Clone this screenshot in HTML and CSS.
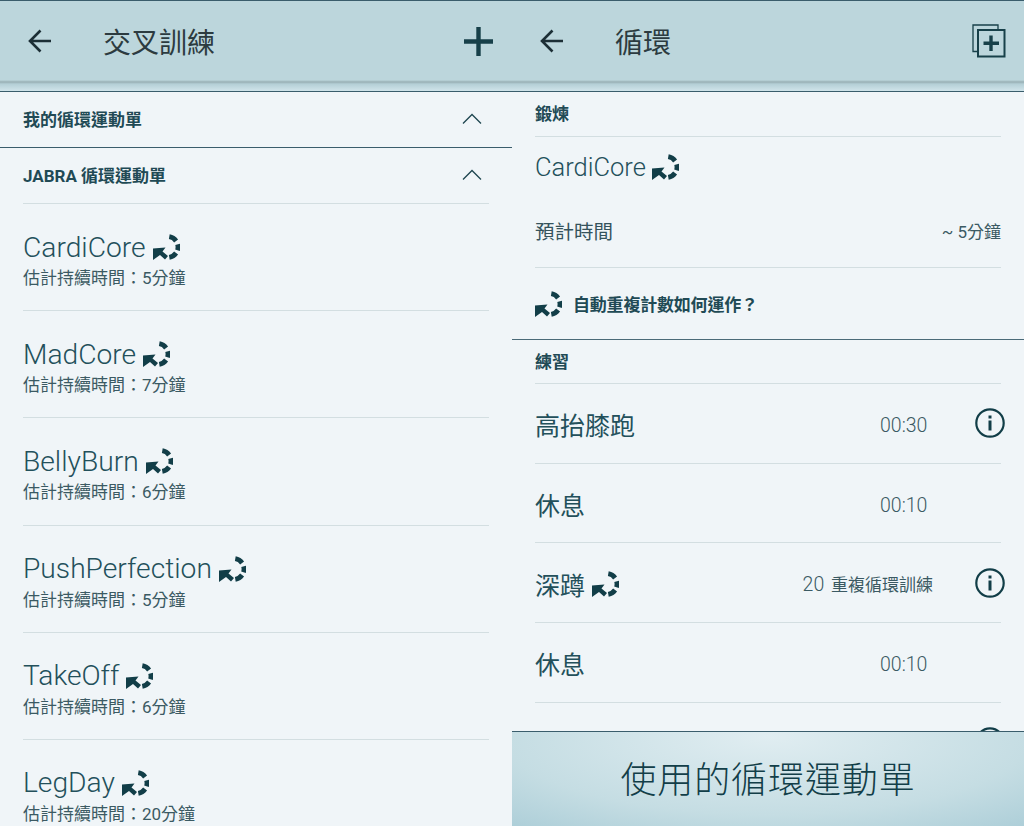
FILE: index.html
```html
<!DOCTYPE html>
<html lang="zh-Hant">
<head>
    <meta charset="UTF-8">
    <title>交叉訓練</title>
    <link rel="stylesheet" href="styles.css">
</head>
<body>
    <svg class="defs" width="0" height="0">
        <symbol id="repeat" viewBox="0 0 27 26">
            <path d="M0 14.500L12.500 13.500 9.500 17.500 15 22 12 25.500 7 21 0 26Z" fill="currentColor"/>
            <g fill="none" stroke="currentColor" stroke-width="4.800">
                <path d="M16.300 2.700A10.500 10.500 0 0 1 23.100 7"/>
                <path d="M24.600 10.300A10.500 10.500 0 0 1 24.500 16.200"/>
                <path d="M23.100 19A10.500 10.500 0 0 1 16.300 23.300"/>
            </g>
        </symbol>
        <symbol id="info" viewBox="0 0 30 30">
            <circle cx="15" cy="15" r="13.700" fill="none" stroke="currentColor" stroke-width="2.200"/>
            <rect x="13.500" y="12.500" width="3" height="10" fill="currentColor"/>
            <rect x="13.500" y="7.500" width="3" height="3" fill="currentColor"/>
        </symbol>
        <symbol id="back" viewBox="0 0 24 24">
            <path d="M23 12H2.500M12.500 1.500 2 12l10.500 10.500" fill="none" stroke="currentColor" stroke-width="2.600"/>
        </symbol>
        <symbol id="chevron" viewBox="0 0 20 12">
            <path d="M1 10.500 10 1.500l9 9" fill="none" stroke="currentColor" stroke-width="1.300"/>
        </symbol>
    </svg>

    <div class="screen">
        <div class="panel">
            <div class="topbar">
                <svg class="back-icon"><use href="#back"/></svg>
                <div class="title">交叉訓練</div>
                <svg class="plus-icon" viewBox="0 0 29 29"><path d="M14.500 0V29M0 14.500H29" fill="none" stroke="currentColor" stroke-width="4.400"/></svg>
            </div>
            <div class="section-row section-row-line">
                <span>我的循環運動單</span>
                <svg class="chevron"><use href="#chevron"/></svg>
            </div>
            <div class="section-row section-row-short">
                <span>JABRA 循環運動單</span>
                <svg class="chevron"><use href="#chevron"/></svg>
            </div>
            <div class="list">
                <div class="card">
                    <div class="card-name">CardiCore <svg class="repeat"><use href="#repeat"/></svg></div>
                    <div class="card-sub">估計持續時間：5分鐘</div>
                </div>
                <div class="card">
                    <div class="card-name">MadCore <svg class="repeat"><use href="#repeat"/></svg></div>
                    <div class="card-sub">估計持續時間：7分鐘</div>
                </div>
                <div class="card">
                    <div class="card-name">BellyBurn <svg class="repeat"><use href="#repeat"/></svg></div>
                    <div class="card-sub">估計持續時間：6分鐘</div>
                </div>
                <div class="card">
                    <div class="card-name">PushPerfection <svg class="repeat"><use href="#repeat"/></svg></div>
                    <div class="card-sub">估計持續時間：5分鐘</div>
                </div>
                <div class="card">
                    <div class="card-name">TakeOff <svg class="repeat"><use href="#repeat"/></svg></div>
                    <div class="card-sub">估計持續時間：6分鐘</div>
                </div>
                <div class="card">
                    <div class="card-name">LegDay <svg class="repeat"><use href="#repeat"/></svg></div>
                    <div class="card-sub">估計持續時間：20分鐘</div>
                </div>
            </div>
        </div>

        <div class="panel">
            <div class="topbar">
                <svg class="back-icon"><use href="#back"/></svg>
                <div class="title">循環</div>
                <svg class="copy-icon" viewBox="0 0 34 34">
                    <path d="M6 27.500H1V1h25v5" fill="none" stroke="currentColor" stroke-width="1.300"/>
                    <rect x="6" y="6" width="26.500" height="26.500" fill="none" stroke="currentColor" stroke-width="2"/>
                    <path d="M19 11.500V27M11.500 19.200H27" fill="none" stroke="currentColor" stroke-width="3.400"/>
                </svg>
            </div>
            <div class="block">
                <div class="block-head">鍛煉</div>
                <div class="workout-name">CardiCore <svg class="repeat"><use href="#repeat"/></svg></div>
                <div class="time-row">
                    <span class="time-label">預計時間</span>
                    <span class="time-value">~ 5分鐘</span>
                </div>
                <div class="help-row">
                    <svg class="repeat"><use href="#repeat"/></svg>
                    <span>自動重複計數如何運作？</span>
                </div>
            </div>
            <div class="block">
                <div class="block-head block-head-2">練習</div>
                <div class="ex-row">
                    <div class="ex-name">高抬膝跑</div>
                    <div class="ex-val">00:30</div>
                    <svg class="info"><use href="#info"/></svg>
                </div>
                <div class="ex-row">
                    <div class="ex-name">休息</div>
                    <div class="ex-val">00:10</div>
                    <div class="info"></div>
                </div>
                <div class="ex-row">
                    <div class="ex-name">深蹲 <svg class="repeat"><use href="#repeat"/></svg></div>
                    <div class="ex-val ex-val-wide">20 <span class="ex-unit">重複循環訓練</span></div>
                    <svg class="info"><use href="#info"/></svg>
                </div>
                <div class="ex-row">
                    <div class="ex-name">休息</div>
                    <div class="ex-val">00:10</div>
                    <div class="info"></div>
                </div>
                <div class="ex-row">
                    <div class="ex-name"></div>
                    <svg class="info"><use href="#info"/></svg>
                </div>
            </div>
            <div class="use-bar">使用的循環運動單</div>
        </div>
    </div>
</body>
</html>
```

FILE: styles.css
```css
html, body {
    margin: 0;
    padding: 0;
}
body {
    background-color: #f0f5f8;
    color: #1d4650;
    font-family: Roboto, "Noto Sans CJK TC", sans-serif;
    font-weight: 300;
}
.defs {
    display: block;
    height: 0;
}
.screen {
    display: flex;
    height: 826px;
    overflow: hidden;
}
.panel {
    position: relative;
    width: 512px;
    height: 826px;
    overflow: hidden;
    background-color: #f0f5f8;
}

/* top bar */
.topbar {
    box-sizing: border-box;
    display: flex;
    align-items: center;
    height: 92px;
    padding: 0 19px 10px 28px;
    border-top: 1px solid #3a5d6c;
    border-bottom: 1px solid #3a5d6c;
    background: linear-gradient(#bcd6dc 0, #bcd6dc 79px, #98afb4 81px, #b4cfd6 83px, #d0e4ea 90px);
    color: #1f3f4a;
}
.back-icon {
    width: 24px;
    height: 24px;
    color: #1c2f36;
}
.title {
    margin-left: 51px;
    flex: 1;
    font-size: 28px;
    font-weight: 400;
    color: #2c3b40;
}
.plus-icon {
    width: 29px;
    height: 29px;
    color: #174049;
}
.copy-icon {
    width: 34px;
    height: 34px;
    margin-right: -1px;
    color: #174049;
}

/* left list */
.section-row {
    box-sizing: border-box;
    display: flex;
    justify-content: space-between;
    align-items: center;
    height: 56px;
    padding: 0 23px 2px;
    font-size: 17px;
    font-weight: 700;
    color: #214a55;
}
.section-row-line {
    border-bottom: 1px solid #3a5d6c;
}
.section-row-short {
    height: 55px;
}
.chevron {
    width: 20px;
    height: 12px;
    margin-right: 7px;
    color: #1f4650;
}
.list {
    margin: 0 23px;
    border-top: 1px solid #d3dee1;
}
.card {
    box-sizing: border-box;
    height: 107.200px;
    padding-top: 26px;
    border-bottom: 1px solid #d3dee1;
}
.card-name {
    display: flex;
    align-items: center;
    gap: 7px;
    height: 34px;
    font-size: 28.200px;
    color: #23505b;
}
.card-sub {
    margin-top: 2px;
    font-size: 17px;
    line-height: 24px;
    font-weight: 400;
    color: #3b5a63;
}
.repeat {
    flex: none;
    width: 27px;
    height: 26px;
    color: #123e48;
}

/* right panel */
.block-head {
    box-sizing: border-box;
    height: 45px;
    margin: 0 23px;
    padding-top: 11px;
    font-size: 17px;
    line-height: 23px;
    font-weight: 700;
    color: #214a55;
    border-bottom: 1px solid #d3dee1;
}
.workout-name {
    box-sizing: border-box;
    display: flex;
    align-items: center;
    gap: 6px;
    height: 62px;
    margin: 0 23px;
    padding-bottom: 2px;
    font-size: 25.500px;
    color: #23505b;
}
.time-row {
    box-sizing: border-box;
    display: flex;
    justify-content: space-between;
    align-items: center;
    height: 69px;
    margin: 0 23px;
    padding-bottom: 5px;
    border-bottom: 1px solid #d3dee1;
}
.time-label {
    font-size: 19.500px;
    font-weight: 400;
    color: #35535c;
}
.time-value {
    font-size: 17px;
    font-weight: 400;
    color: #3b5a63;
}
.help-row {
    box-sizing: border-box;
    display: flex;
    align-items: center;
    gap: 11px;
    height: 72px;
    padding: 0 23px;
    border-bottom: 1px solid #4a6a78;
    font-size: 17px;
    letter-spacing: -0.200px;
    font-weight: 700;
    color: #214a55;
}
.block-head-2 {
    height: 44px;
    padding-top: 11px;
}
.ex-row {
    box-sizing: border-box;
    display: flex;
    align-items: center;
    height: 79.700px;
    margin: 0 23px;
    padding-top: 2px;
    border-bottom: 1px solid #d3dee1;
}
.ex-name {
    display: flex;
    align-items: center;
    gap: 7px;
    flex: 1;
    font-size: 25px;
    font-weight: 400;
    color: #23505b;
}
.ex-val {
    width: 48px;
    margin-top: 2px;
    margin-right: 47px;
    font-size: 19.500px;
    color: #3b5a63;
}
.ex-val-wide {
    width: auto;
    margin-top: 0;
    margin-right: 42px;
}
.ex-unit {
    margin-left: 2px;
    font-size: 17px;
    font-weight: 400;
}
.info {
    width: 30px;
    height: 30px;
    margin-right: -4px;
    margin-bottom: 2px;
    color: #123e48;
}
.use-bar {
    position: absolute;
    left: 0;
    right: 0;
    bottom: 0;
    height: 95px;
    border-top: 1px solid #3a5d6c;
    box-sizing: border-box;
    padding-bottom: 4px;
    display: flex;
    align-items: center;
    justify-content: center;
    background: radial-gradient(ellipse 440px 130px at 50% 5%, #e0edf1 0, #c5dde3 60%, #a6cad5 100%);
    font-size: 36px;
    letter-spacing: 0.900px;
    font-weight: 300;
    color: #123e48;
}
```
